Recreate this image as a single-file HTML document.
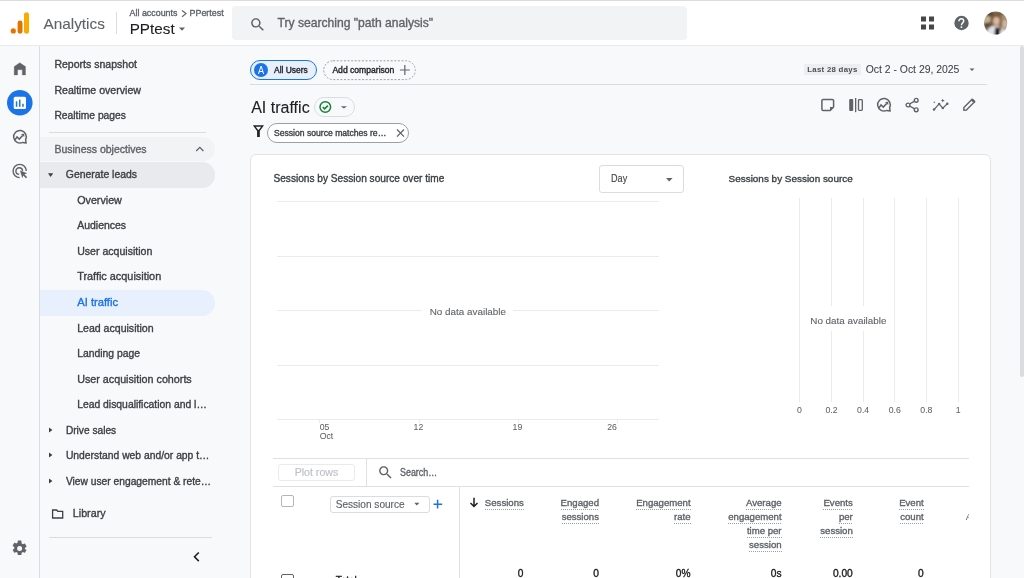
<!DOCTYPE html>
<html><head><meta charset="utf-8"><style>
html,body{margin:0;padding:0;width:1024px;height:578px;overflow:hidden;background:#f8f9fa;font-family:"Liberation Sans",sans-serif;}
.t{position:absolute;white-space:nowrap;-webkit-text-stroke:0.35px currentColor;}
#w{position:absolute;left:0;top:0;width:1024px;height:578px;overflow:hidden;will-change:transform;}
</style></head><body><div id="w">
<div style="position:absolute;left:0px;top:0px;width:1024px;height:1px;background:#dcdcdc"></div>
<div style="position:absolute;left:0px;top:1px;width:1024px;height:44px;background:#fff"></div>
<div style="position:absolute;left:0px;top:45px;width:1024px;height:1px;background:#e8eaed"></div>
<svg style="position:absolute;left:8px;top:10px;" width="24" height="26" viewBox="0 0 24 26"><circle cx="5.3" cy="20.9" r="2.6" fill="#e37400"/><rect x="9.6" y="10.5" width="4.9" height="13.3" rx="2.45" fill="#e37400"/><rect x="16" y="2.3" width="5" height="21.5" rx="2.5" fill="#f9ab00"/></svg>
<div class="t" style="left:43.40px;top:14.70px;font-size:15.39px;line-height:18.47px;color:#5f6368;-webkit-text-stroke:0.1px currentColor;">Analytics</div>
<div style="position:absolute;left:116px;top:12px;width:1px;height:22px;background:#dadce0"></div>
<div class="t" style="left:129.60px;top:7.81px;font-size:8.90px;line-height:10.68px;color:#5f6368;">All accounts</div>
<svg style="position:absolute;left:180px;top:9px;" width="8" height="9" viewBox="0 0 8 9"><path d="M2 1.5 L6 4.6 L2 7.7" fill="none" stroke="#5f6368" stroke-width="1.2"/></svg>
<div class="t" style="left:189.60px;top:7.81px;font-size:8.90px;line-height:10.68px;color:#5f6368;">PPertest</div>
<div class="t" style="left:129.70px;top:20.01px;font-size:15.28px;line-height:18.33px;color:#202124;-webkit-text-stroke:0.1px currentColor;">PPtest</div>
<svg style="position:absolute;left:178px;top:26px;" width="8" height="6" viewBox="0 0 8 6"><path d="M1 1.5 H7 L4 4.8 Z" fill="#5f6368"/></svg>
<div style="position:absolute;left:232px;top:6px;width:455px;height:34px;background:#f1f3f4;border-radius:4px"></div>
<svg style="position:absolute;left:248.5px;top:15.6px;" width="17.4" height="17.4" viewBox="0 0 24 24"><path fill="#5f6368" d="M15.5 14h-.79l-.28-.27C15.41 12.59 16 11.11 16 9.5 16 5.91 13.09 3 9.5 3S3 5.91 3 9.5 5.91 16 9.5 16c1.61 0 3.09-.59 4.23-1.57l.27.28v.79l5 4.99L20.49 19l-4.99-5zm-6 0C7.01 14 5 11.99 5 9.5S7.01 5 9.5 5 14 7.01 14 9.5 11.99 14 9.5 14z"/></svg>
<div class="t" style="left:277.50px;top:16.22px;font-size:12.11px;line-height:14.53px;color:#5f6368;">Try searching "path analysis"</div>
<svg style="position:absolute;left:920px;top:16px;" width="15" height="15" viewBox="0 0 15 15"><rect x="1" y="0.5" width="5" height="5" fill="#444746"/><rect x="9" y="0.5" width="5" height="5" fill="#444746"/><rect x="1" y="8.5" width="5" height="5" fill="#444746"/><rect x="9" y="8.5" width="5" height="5" fill="#444746"/></svg>
<svg style="position:absolute;left:953px;top:15px;" width="17" height="17" viewBox="0 0 17 17"><circle cx="8.5" cy="8" r="7.2" fill="#5f6368"/><path d="M5.9 6.3 C5.9 4.7 7 3.8 8.3 3.8 C9.7 3.8 10.7 4.8 10.7 6 C10.7 7.7 8.6 7.9 8.4 10.2" fill="none" stroke="#fff" stroke-width="1.45"/><circle cx="8.4" cy="12.1" r="0.95" fill="#fff"/></svg>
<svg style="position:absolute;left:983px;top:10px;" width="26" height="26" viewBox="0 0 26 26"><defs><clipPath id="av"><circle cx="12.6" cy="13" r="11.6"/></clipPath><filter id="bl" x="-20%" y="-20%" width="140%" height="140%"><feGaussianBlur stdDeviation="1"/></filter></defs><g clip-path="url(#av)"><g filter="url(#bl)"><rect width="26" height="26" fill="#85735f"/><ellipse cx="3.5" cy="9" rx="4" ry="5" fill="#c4b193"/><ellipse cx="5" cy="15" rx="4" ry="2.5" fill="#5a4c3e"/><ellipse cx="7" cy="4" rx="4" ry="2.5" fill="#4d4238"/><ellipse cx="21" cy="7" rx="4" ry="5" fill="#a48f74"/><ellipse cx="22" cy="14" rx="3" ry="4" fill="#c9b79e"/><ellipse cx="19" cy="3" rx="3" ry="2" fill="#6a5a48"/><path d="M8 9 C8 4 10.5 2.5 13.5 2.5 C17 2.5 18.5 5 18.5 9 L19.5 22 L16 22 L15.5 12 L11 12 L10 19 L7.5 19Z" fill="#7d5a3a"/><ellipse cx="13.4" cy="11" rx="3.3" ry="4" fill="#dbb9a0"/><path d="M3 27 C3.5 20 6.5 16 10.5 16 L16 16 C20 17 23 20 24 27Z" fill="#e2e4ea"/><path d="M11.5 27 L12 17.5 L16.5 17.5 L17 27Z" fill="#16161d"/><path d="M16 12 L18.2 12 L18.8 21 L16.6 21Z" fill="#8d6745"/></g></g></svg>
<div style="position:absolute;left:39px;top:46px;width:1px;height:532px;background:#dadce0"></div>
<svg style="position:absolute;left:12px;top:61px;" width="16" height="16" viewBox="0 0 16 16"><path d="M2.2 5.6 L7.8 1.7 L13.5 5.6 V14 H10.3 V8.7 H5.6 V14 H2.2 Z" fill="#5f6368" stroke="#5f6368" stroke-width="0.3" stroke-linejoin="round"/></svg>
<svg style="position:absolute;left:7px;top:90px;" width="26" height="26" viewBox="0 0 26 26"><circle cx="12.8" cy="12.8" r="12.8" fill="#1a73e8"/><rect x="6.7" y="6.8" width="12.3" height="12.2" rx="1.5" fill="#fff"/><rect x="8.8" y="11.3" width="1.5" height="5.5" fill="#1a73e8"/><rect x="12" y="9.6" width="1.5" height="7.2" fill="#1a73e8"/><rect x="15.2" y="13.8" width="1.5" height="3" fill="#1a73e8"/></svg>
<svg style="position:absolute;left:12px;top:129px;" width="16" height="16" viewBox="0 0 16 16"><path d="M13.6 10.6 A6.3 6.3 0 1 0 10.8 13.4 L14.1 14.1 Z" fill="none" stroke="#5f6368" stroke-width="1.5" stroke-linejoin="round"/><path d="M2.9 11.1 L5 7.9 L7.3 10.1 L10.6 6.4" fill="none" stroke="#5f6368" stroke-width="1.5"/><path d="M9 4.9 L12.3 4.8 L12.2 8.1 Z" fill="#5f6368"/></svg>
<svg style="position:absolute;left:12px;top:163px;" width="16" height="16" viewBox="0 0 16 16"><path d="M7.7 14.6 A6.6 6.6 0 1 1 14.3 8" fill="none" stroke="#5f6368" stroke-width="1.4"/><path d="M7.2 11.3 A3.3 3.3 0 1 1 10.5 8" fill="none" stroke="#5f6368" stroke-width="1.4"/><path d="M8 7.6 L15.2 10.3 L12.4 11.2 L15.2 14.2 L14 15.3 L11.2 12.4 L10.3 15.2 Z" fill="#5f6368"/></svg>
<svg style="position:absolute;left:11.4px;top:540px;" width="16" height="16" viewBox="0 0 16 16"><path fill="#5f6368" d="M13.7 8.7c.03-.23.05-.46.05-.7s-.02-.47-.05-.7l1.5-1.2c.14-.1.17-.3.09-.45l-1.43-2.5c-.09-.15-.27-.2-.43-.15l-1.78.72c-.37-.28-.77-.52-1.2-.7L10.17.1A.35.35 0 0 0 9.82 0H6.98c-.18 0-.33.13-.35.3l-.27 1.9c-.43.18-.83.42-1.2.7l-1.78-.72c-.16-.06-.34 0-.43.15L1.52 4.83c-.09.15-.05.34.09.45l1.51 1.18c-.03.23-.05.47-.05.7s.02.47.05.7L1.6 9.06c-.14.1-.17.3-.09.45l1.43 2.5c.09.15.27.2.43.15l1.78-.72c.37.28.77.52 1.2.7l.27 1.9c.02.17.17.3.35.3h2.86c.18 0 .33-.13.35-.3l.27-1.9c.43-.18.83-.42 1.2-.7l1.78.72c.16.06.34 0 .43-.15l1.43-2.5c.09-.15.05-.34-.09-.45L13.7 8.7zM8.4 10.5a2.5 2.5 0 1 1 0-5 2.5 2.5 0 0 1 0 5z" transform="translate(0.2,0.6)"/></svg>
<div class="t" style="left:54.40px;top:58.10px;font-size:10.54px;line-height:12.65px;color:#3c4043;">Reports snapshot</div>
<div class="t" style="left:54.40px;top:83.60px;font-size:10.60px;line-height:12.72px;color:#3c4043;">Realtime overview</div>
<div class="t" style="left:54.40px;top:109.91px;font-size:10.31px;line-height:12.37px;color:#3c4043;">Realtime pages</div>
<div style="position:absolute;left:49px;top:132px;width:157px;height:1px;background:#dadce0"></div>
<div style="position:absolute;left:40px;top:137px;width:175px;height:24px;background:#f1f3f4;border-radius:0 12px 12px 0"></div>
<div class="t" style="left:54.40px;top:142.61px;font-size:10.51px;line-height:12.61px;color:#5f6368;">Business objectives</div>
<svg style="position:absolute;left:195px;top:145px;" width="10" height="8" viewBox="0 0 10 8"><path d="M1.2 6 L4.8 2.4 L8.4 6" fill="none" stroke="#5f6368" stroke-width="1.3"/></svg>
<div style="position:absolute;left:40px;top:162px;width:175px;height:25.5px;background:#e8eaed;border-radius:0 12.75px 12.75px 0"></div>
<svg style="position:absolute;left:47px;top:172px;" width="8" height="7" viewBox="0 0 8 7"><path d="M1 1.3 H6.2 L3.6 4.9 Z" fill="#3c4043"/></svg>
<div class="t" style="left:65.80px;top:169.11px;font-size:10.41px;line-height:12.50px;color:#3c4043;">Generate leads</div>
<div class="t" style="left:77.20px;top:193.61px;font-size:10.73px;line-height:12.87px;color:#3c4043;">Overview</div>
<div class="t" style="left:77.20px;top:220.01px;font-size:10.47px;line-height:12.57px;color:#3c4043;">Audiences</div>
<div class="t" style="left:77.20px;top:244.72px;font-size:10.57px;line-height:12.69px;color:#3c4043;">User acquisition</div>
<div class="t" style="left:77.20px;top:270.41px;font-size:10.89px;line-height:13.06px;color:#3c4043;">Traffic acquisition</div>
<div style="position:absolute;left:40px;top:290px;width:175px;height:25.6px;background:#e8f0fe;border-radius:0 12.8px 12.8px 0"></div>
<div class="t" style="left:77.20px;top:295.71px;font-size:11.21px;line-height:13.45px;color:#1a73e8;">AI traffic</div>
<div class="t" style="left:77.20px;top:321.72px;font-size:10.57px;line-height:12.69px;color:#3c4043;">Lead acquisition</div>
<div class="t" style="left:77.20px;top:348.31px;font-size:10.36px;line-height:12.43px;color:#3c4043;">Landing page</div>
<div class="t" style="left:77.20px;top:372.70px;font-size:10.74px;line-height:12.89px;color:#3c4043;">User acquisition cohorts</div>
<div class="t" style="left:77.20px;top:399.21px;font-size:10.36px;line-height:12.43px;color:#3c4043;">Lead disqualification and l…</div>
<svg style="position:absolute;left:47px;top:426.9px;" width="7" height="7" viewBox="0 0 7 7"><path d="M2 0.6 V5.4 L5.4 3 Z" fill="#3c4043"/></svg>
<div class="t" style="left:65.90px;top:424.91px;font-size:10.17px;line-height:12.20px;color:#3c4043;">Drive sales</div>
<svg style="position:absolute;left:47px;top:452.2px;" width="7" height="7" viewBox="0 0 7 7"><path d="M2 0.6 V5.4 L5.4 3 Z" fill="#3c4043"/></svg>
<div class="t" style="left:65.90px;top:450.21px;font-size:10.33px;line-height:12.40px;color:#3c4043;">Understand web and/or app t…</div>
<svg style="position:absolute;left:47px;top:478px;" width="7" height="7" viewBox="0 0 7 7"><path d="M2 0.6 V5.4 L5.4 3 Z" fill="#3c4043"/></svg>
<div class="t" style="left:65.90px;top:476.00px;font-size:10.25px;line-height:12.30px;color:#3c4043;">View user engagement &amp; rete…</div>
<svg style="position:absolute;left:50px;top:507px;" width="15" height="13" viewBox="0 0 15 13"><path d="M2.6 3 H6.6 L7.8 4.3 H12.7 V11 H2.6 Z" fill="none" stroke="#3c4043" stroke-width="1.3"/></svg>
<div class="t" style="left:72.80px;top:507.41px;font-size:10.73px;line-height:12.88px;color:#3c4043;">Library</div>
<div style="position:absolute;left:49px;top:537px;width:163px;height:1px;background:#dadce0"></div>
<svg style="position:absolute;left:192px;top:551px;" width="9" height="12" viewBox="0 0 9 12"><path d="M6.8 1.5 L2.5 5.8 L6.8 10.1" fill="none" stroke="#202124" stroke-width="1.6"/></svg>
<div style="position:absolute;left:250.3px;top:60.3px;width:66.7px;height:19.7px;box-sizing:border-box;border:1px solid #1a73e8;background:#e8f0fe;border-radius:10px"></div>
<svg style="position:absolute;left:254px;top:63px;" width="14" height="14" viewBox="0 0 14 14"><circle cx="7" cy="7" r="7" fill="#1a73e8"/></svg>
<div class="t" style="left:258.20px;top:64.01px;font-size:10.80px;line-height:12.96px;color:#fff;-webkit-text-stroke:0px currentColor;transform:scaleX(0.8468);transform-origin:0 0;">A</div>
<div class="t" style="left:274.00px;top:65.11px;font-size:8.45px;line-height:10.14px;color:#202124;">All Users</div>
<svg style="position:absolute;left:323px;top:60px;" width="93" height="21" viewBox="0 0 93 21"><rect x="0.7" y="0.8" width="91.6" height="18.8" rx="9.4" fill="none" stroke="#9aa0a6" stroke-width="1" stroke-dasharray="2 1.6"/></svg>
<div class="t" style="left:332.40px;top:65.11px;font-size:8.58px;line-height:10.30px;color:#202124;">Add comparison</div>
<svg style="position:absolute;left:399px;top:64px;" width="12" height="12" viewBox="0 0 12 12"><path d="M5.85 1 V11 M0.9 6 H10.8" fill="none" stroke="#5f6368" stroke-width="1.2"/></svg>
<div style="position:absolute;left:250px;top:84px;width:737px;height:1px;background:#dadce0"></div>
<div style="position:absolute;left:804.4px;top:63.8px;width:56.6px;height:11.1px;background:#eceef0"></div>
<div class="t" style="left:807.20px;top:65.20px;font-size:7.80px;line-height:9.36px;color:#4a4e52;font-weight:700;letter-spacing:0.3px;-webkit-text-stroke:0px currentColor;">Last 28 days</div>
<div class="t" style="left:865.70px;top:64.21px;font-size:10.42px;line-height:12.50px;color:#3c4043;-webkit-text-stroke:0.05px currentColor;">Oct 2 - Oct 29, 2025</div>
<svg style="position:absolute;left:968px;top:67px;" width="8" height="5" viewBox="0 0 8 5"><path d="M1.5 1.5 H6.5 L4 4 Z" fill="#5f6368"/></svg>
<div class="t" style="left:251.20px;top:97.91px;font-size:16.03px;line-height:19.24px;color:#202124;-webkit-text-stroke:0.1px currentColor;">AI traffic</div>
<div style="position:absolute;left:313.6px;top:97.4px;width:41.8px;height:19.3px;box-sizing:border-box;border:1px solid #dadce0;border-radius:10px"></div>
<svg style="position:absolute;left:318px;top:100px;" width="15" height="15" viewBox="0 0 15 15"><circle cx="7.3" cy="7" r="5.3" fill="none" stroke="#188038" stroke-width="1.5"/><path d="M4.8 7.1 L6.6 8.9 L9.9 5.6" fill="none" stroke="#188038" stroke-width="1.5"/></svg>
<svg style="position:absolute;left:339px;top:104px;" width="10" height="6" viewBox="0 0 10 6"><path d="M1.8 2.2 H8 L4.9 4.6 Z" fill="#5f6368"/></svg>
<svg style="position:absolute;left:252px;top:124px;" width="13" height="14" viewBox="0 0 13 14"><path d="M0.9 1.2 H12 L7.8 6.9 V13.1 H5.1 V6.9 Z" fill="#202124"/><path d="M3.7 2.8 H9.2 L6.45 6.3 Z" fill="#f8f9fa"/></svg>
<div style="position:absolute;left:267px;top:123px;width:142.4px;height:19.7px;box-sizing:border-box;border:1px solid #9aa0a6;background:#fff;border-radius:10px"></div>
<div class="t" style="left:274.00px;top:127.71px;font-size:8.61px;line-height:10.34px;color:#3c4043;">Session source matches re…</div>
<svg style="position:absolute;left:395px;top:128px;" width="11" height="11" viewBox="0 0 11 11"><path d="M2 1.5 L9 8.6 M9 1.5 L2 8.6" fill="none" stroke="#5f6368" stroke-width="1.3"/></svg>
<svg style="position:absolute;left:819.5px;top:97px;" width="16" height="16" viewBox="0 0 16 16"><path d="M3.2 2.5 H12.3 Q13.6 2.5 13.6 3.8 V10 L10 13.6 H3.2 Q1.9 13.6 1.9 12.3 V3.8 Q1.9 2.5 3.2 2.5 Z" fill="none" stroke="#5f6368" stroke-width="1.5" stroke-linejoin="round"/><path d="M13.6 10 H10 V13.6 Z" fill="#5f6368"/></svg>
<svg style="position:absolute;left:848px;top:97px;" width="17" height="16" viewBox="0 0 17 16"><rect x="1.2" y="2" width="4" height="12" rx="1" fill="#5f6368"/><rect x="7" y="1" width="1.3" height="14.2" fill="#5f6368"/><rect x="10.5" y="2.6" width="3.8" height="10.8" rx="0.8" fill="none" stroke="#5f6368" stroke-width="1.3"/></svg>
<svg style="position:absolute;left:876px;top:97px;" width="17" height="16" viewBox="0 0 17 16"><path d="M13.6 10.6 A6.3 6.3 0 1 0 10.8 13.4 L14.1 14.1 Z" fill="none" stroke="#5f6368" stroke-width="1.5" stroke-linejoin="round"/><path d="M2.9 11.1 L5 7.9 L7.3 10.1 L10.6 6.4" fill="none" stroke="#5f6368" stroke-width="1.5"/><path d="M9 4.9 L12.3 4.8 L12.2 8.1 Z" fill="#5f6368"/></svg>
<svg style="position:absolute;left:905px;top:97px;" width="16" height="16" viewBox="0 0 16 16"><circle cx="11.2" cy="3.3" r="1.9" fill="none" stroke="#5f6368" stroke-width="1.4"/><circle cx="3" cy="8" r="1.9" fill="none" stroke="#5f6368" stroke-width="1.4"/><circle cx="11.2" cy="12.8" r="1.9" fill="none" stroke="#5f6368" stroke-width="1.4"/><path d="M4.6 7 L9.6 4.2 M4.6 9 L9.6 11.9" stroke="#5f6368" stroke-width="1.4"/></svg>
<svg style="position:absolute;left:932px;top:97px;" width="18" height="16" viewBox="0 0 18 16"><path d="M2 12.6 L7.1 6.9 L10.8 11.1 L15.3 6.8" fill="none" stroke="#5f6368" stroke-width="1.3"/><circle cx="2" cy="12.6" r="1.25" fill="#5f6368"/><circle cx="7.1" cy="6.9" r="1.25" fill="#5f6368"/><circle cx="10.8" cy="11.1" r="1.25" fill="#5f6368"/><circle cx="15.3" cy="6.8" r="1.25" fill="#5f6368"/><path d="M10.8 1.7 L11.4 3.0 L12.7 3.6 L11.4 4.2 L10.8 5.5 L10.2 4.2 L8.9 3.6 L10.2 3.0Z" fill="#5f6368"/><path d="M2.4 4.7 V6.1 M1.7 5.4 H3.1" stroke="#5f6368" stroke-width="0.7"/></svg>
<svg style="position:absolute;left:961px;top:97px;" width="16" height="16" viewBox="0 0 16 16"><path d="M2.8 13.2 L2.9 10.6 L10.9 2.6 L13.4 5.1 L5.4 13.1 Z" fill="none" stroke="#5f6368" stroke-width="1.4" stroke-linejoin="round"/><path d="M11.3 2.9 L13.1 4.7" stroke="#5f6368" stroke-width="2.6" stroke-linecap="round"/></svg>
<div style="position:absolute;left:250px;top:154px;width:740.6px;height:440px;box-sizing:border-box;border:1px solid #e3e3e3;background:#fff;border-radius:6px"></div>
<div class="t" style="left:273.50px;top:173.41px;font-size:10.12px;line-height:12.15px;color:#3c4043;">Sessions by Session source over time</div>
<div style="position:absolute;left:599.3px;top:165.3px;width:84.4px;height:27.8px;box-sizing:border-box;border:1px solid #dadce0;border-radius:3px"></div>
<div class="t" style="left:610.70px;top:172.31px;font-size:10.60px;line-height:12.72px;color:#3c4043;-webkit-text-stroke:0.1px currentColor;transform:scaleX(0.8594);transform-origin:0 0;">Day</div>
<svg style="position:absolute;left:665px;top:176px;" width="9" height="7" viewBox="0 0 9 7"><path d="M1 1.9 H7.6 L4.3 5.4 Z" fill="#5f6368"/></svg>
<div style="position:absolute;left:276.7px;top:201px;width:382.4px;height:1px;background:#ebebeb"></div>
<div style="position:absolute;left:276.7px;top:256px;width:382.4px;height:1px;background:#ebebeb"></div>
<div style="position:absolute;left:276.7px;top:310px;width:382.4px;height:1px;background:#ebebeb"></div>
<div style="position:absolute;left:276.7px;top:365px;width:382.4px;height:1px;background:#ebebeb"></div>
<div style="position:absolute;left:276.7px;top:419px;width:382.4px;height:1px;background:#ebebeb"></div>
<div style="position:absolute;left:422.3px;top:300px;width:90.8px;height:20px;background:#fff"></div>
<div class="t" style="left:429.70px;top:305.71px;font-size:9.89px;line-height:11.86px;color:#5f6368;-webkit-text-stroke:0.1px currentColor;">No data available</div>
<div style="position:absolute;left:319.3px;top:419px;width:1px;height:4px;background:#ebebeb"></div>
<div class="t" style="left:319.70px;top:422.00px;font-size:8.70px;line-height:10.44px;color:#5f6368;-webkit-text-stroke:0.05px currentColor;">05</div>
<div style="position:absolute;left:418.5px;top:419px;width:1px;height:4px;background:#ebebeb"></div>
<div class="t" style="left:413.56px;top:422.00px;font-size:8.70px;line-height:10.44px;color:#5f6368;-webkit-text-stroke:0.05px currentColor;">12</div>
<div style="position:absolute;left:517.5px;top:419px;width:1px;height:4px;background:#ebebeb"></div>
<div class="t" style="left:512.56px;top:422.00px;font-size:8.70px;line-height:10.44px;color:#5f6368;-webkit-text-stroke:0.05px currentColor;">19</div>
<div style="position:absolute;left:617px;top:419px;width:1px;height:4px;background:#ebebeb"></div>
<div class="t" style="left:607.22px;top:422.00px;font-size:8.70px;line-height:10.44px;color:#5f6368;-webkit-text-stroke:0.05px currentColor;">26</div>
<div class="t" style="left:319.70px;top:430.50px;font-size:8.70px;line-height:10.44px;color:#5f6368;-webkit-text-stroke:0.05px currentColor;">Oct</div>
<div class="t" style="left:728.60px;top:173.20px;font-size:9.93px;line-height:11.92px;color:#3c4043;">Sessions by Session source</div>
<div style="position:absolute;left:798.8px;top:197.5px;width:1px;height:204.2px;background:#ebebeb"></div>
<div class="t" style="left:796.88px;top:405.10px;font-size:8.70px;line-height:10.44px;color:#5f6368;-webkit-text-stroke:0.05px currentColor;">0</div>
<div style="position:absolute;left:831.0px;top:197.5px;width:1px;height:204.2px;background:#ebebeb"></div>
<div class="t" style="left:825.45px;top:405.10px;font-size:8.70px;line-height:10.44px;color:#5f6368;-webkit-text-stroke:0.05px currentColor;">0.2</div>
<div style="position:absolute;left:862.6px;top:197.5px;width:1px;height:204.2px;background:#ebebeb"></div>
<div class="t" style="left:857.05px;top:405.10px;font-size:8.70px;line-height:10.44px;color:#5f6368;-webkit-text-stroke:0.05px currentColor;">0.4</div>
<div style="position:absolute;left:894.3px;top:197.5px;width:1px;height:204.2px;background:#ebebeb"></div>
<div class="t" style="left:888.75px;top:405.10px;font-size:8.70px;line-height:10.44px;color:#5f6368;-webkit-text-stroke:0.05px currentColor;">0.6</div>
<div style="position:absolute;left:925.9px;top:197.5px;width:1px;height:204.2px;background:#ebebeb"></div>
<div class="t" style="left:920.35px;top:405.10px;font-size:8.70px;line-height:10.44px;color:#5f6368;-webkit-text-stroke:0.05px currentColor;">0.8</div>
<div style="position:absolute;left:957.7px;top:197.5px;width:1px;height:204.2px;background:#ebebeb"></div>
<div class="t" style="left:955.78px;top:405.10px;font-size:8.70px;line-height:10.44px;color:#5f6368;-webkit-text-stroke:0.05px currentColor;">1</div>
<div style="position:absolute;left:806px;top:306px;width:84px;height:24.5px;background:#fff"></div>
<div class="t" style="left:810.30px;top:314.91px;font-size:9.86px;line-height:11.83px;color:#5f6368;-webkit-text-stroke:0.1px currentColor;">No data available</div>
<div style="position:absolute;left:273px;top:458px;width:696px;height:1px;background:#e0e0e0"></div>
<div style="position:absolute;left:277.7px;top:464px;width:77.1px;height:16.7px;box-sizing:border-box;border:1px solid #e8eaed;border-radius:3px"></div>
<div class="t" style="left:294.70px;top:466.00px;font-size:10.58px;line-height:12.69px;color:#bdc1c6;-webkit-text-stroke:0.15px currentColor;">Plot rows</div>
<div style="position:absolute;left:366px;top:458px;width:1px;height:28px;background:#e0e0e0"></div>
<div style="position:absolute;left:273px;top:486px;width:696px;height:1px;background:#e0e0e0"></div>
<svg style="position:absolute;left:377px;top:464px;" width="17" height="17" viewBox="0 0 24 24"><path fill="#5f6368" d="M15.5 14h-.79l-.28-.27C15.41 12.59 16 11.11 16 9.5 16 5.91 13.09 3 9.5 3S3 5.91 3 9.5 5.91 16 9.5 16c1.61 0 3.09-.59 4.23-1.57l.27.28v.79l5 4.99L20.49 19l-4.99-5zm-6 0C7.01 14 5 11.99 5 9.5S7.01 5 9.5 5 14 7.01 14 9.5 11.99 14 9.5 14z"/></svg>
<div class="t" style="left:400.20px;top:467.00px;font-size:10.00px;line-height:12.00px;color:#5f6368;transform:scaleX(0.8901);transform-origin:0 0;">Search…</div>
<div style="position:absolute;left:281.2px;top:494.9px;width:12.4px;height:12.4px;box-sizing:border-box;border:1.5px solid #b5b5b5;border-radius:2px"></div>
<div style="position:absolute;left:329.5px;top:496.3px;width:100px;height:16.6px;box-sizing:border-box;border:1px solid #dadce0;border-radius:3px"></div>
<div class="t" style="left:335.70px;top:499.01px;font-size:10.08px;line-height:12.09px;color:#5f6368;-webkit-text-stroke:0.15px currentColor;">Session source</div>
<svg style="position:absolute;left:413px;top:501px;" width="8" height="6" viewBox="0 0 8 6"><path d="M1.3 1.8 H6.4 L3.85 4.6 Z" fill="#5f6368"/></svg>
<svg style="position:absolute;left:433px;top:498px;" width="11" height="12" viewBox="0 0 11 12"><path d="M4.6 1.8 V10.6 M0.5 6.2 H9.2" fill="none" stroke="#1a73e8" stroke-width="1.5"/></svg>
<div style="position:absolute;left:459px;top:486px;width:1px;height:100px;background:#e0e0e0"></div>
<svg style="position:absolute;left:469px;top:497px;" width="11" height="11" viewBox="0 0 11 11"><path d="M5 0.8 V9.5 M1.5 6 L5 9.5 L8.5 6" fill="none" stroke="#202124" stroke-width="1.5"/></svg>
<div class="t" style="left:484.85px;top:496.70px;font-size:9.60px;line-height:11.52px;color:#5f6368;">Sessions</div>
<div style="position:absolute;left:484.84799999999996px;top:508.7px;width:38.952px;height:1px;background:repeating-linear-gradient(90deg,#9aa0a6 0 1px,transparent 1px 2px)"></div>
<div class="t" style="left:560.57px;top:496.70px;font-size:9.60px;line-height:11.52px;color:#5f6368;">Engaged</div>
<div style="position:absolute;left:560.5655px;top:508.7px;width:38.4345px;height:1px;background:repeating-linear-gradient(90deg,#9aa0a6 0 1px,transparent 1px 2px)"></div>
<div class="t" style="left:561.65px;top:510.90px;font-size:9.60px;line-height:11.52px;color:#5f6368;">sessions</div>
<div style="position:absolute;left:561.6514999999999px;top:522.9px;width:37.3485px;height:1px;background:repeating-linear-gradient(90deg,#9aa0a6 0 1px,transparent 1px 2px)"></div>
<div class="t" style="left:636.16px;top:496.70px;font-size:9.60px;line-height:11.52px;color:#5f6368;">Engagement</div>
<div style="position:absolute;left:636.1635px;top:508.7px;width:54.436499999999995px;height:1px;background:repeating-linear-gradient(90deg,#9aa0a6 0 1px,transparent 1px 2px)"></div>
<div class="t" style="left:674.06px;top:510.90px;font-size:9.60px;line-height:11.52px;color:#5f6368;">rate</div>
<div style="position:absolute;left:674.0595000000001px;top:522.9px;width:16.540499999999998px;height:1px;background:repeating-linear-gradient(90deg,#9aa0a6 0 1px,transparent 1px 2px)"></div>
<div class="t" style="left:746.02px;top:496.70px;font-size:9.60px;line-height:11.52px;color:#5f6368;">Average</div>
<div style="position:absolute;left:746.02px;top:508.7px;width:35.58px;height:1px;background:repeating-linear-gradient(90deg,#9aa0a6 0 1px,transparent 1px 2px)"></div>
<div class="t" style="left:728.23px;top:510.90px;font-size:9.60px;line-height:11.52px;color:#5f6368;">engagement</div>
<div style="position:absolute;left:728.2285px;top:522.9px;width:53.3715px;height:1px;background:repeating-linear-gradient(90deg,#9aa0a6 0 1px,transparent 1px 2px)"></div>
<div class="t" style="left:746.92px;top:525.01px;font-size:9.60px;line-height:11.52px;color:#5f6368;">time per</div>
<div style="position:absolute;left:746.9245000000001px;top:537px;width:34.6755px;height:1px;background:repeating-linear-gradient(90deg,#9aa0a6 0 1px,transparent 1px 2px)"></div>
<div class="t" style="left:749.05px;top:538.82px;font-size:9.60px;line-height:11.52px;color:#5f6368;">session</div>
<div style="position:absolute;left:749.0515px;top:550.8px;width:32.5485px;height:1px;background:repeating-linear-gradient(90deg,#9aa0a6 0 1px,transparent 1px 2px)"></div>
<div class="t" style="left:823.45px;top:496.70px;font-size:9.60px;line-height:11.52px;color:#5f6368;">Events</div>
<div style="position:absolute;left:823.4525px;top:508.7px;width:29.3475px;height:1px;background:repeating-linear-gradient(90deg,#9aa0a6 0 1px,transparent 1px 2px)"></div>
<div class="t" style="left:838.93px;top:510.90px;font-size:9.60px;line-height:11.52px;color:#5f6368;">per</div>
<div style="position:absolute;left:838.9264999999999px;top:522.9px;width:13.8735px;height:1px;background:repeating-linear-gradient(90deg,#9aa0a6 0 1px,transparent 1px 2px)"></div>
<div class="t" style="left:820.25px;top:525.01px;font-size:9.60px;line-height:11.52px;color:#5f6368;">session</div>
<div style="position:absolute;left:820.2515px;top:537px;width:32.5485px;height:1px;background:repeating-linear-gradient(90deg,#9aa0a6 0 1px,transparent 1px 2px)"></div>
<div class="t" style="left:899.15px;top:496.70px;font-size:9.60px;line-height:11.52px;color:#5f6368;">Event</div>
<div style="position:absolute;left:899.1525px;top:508.7px;width:24.5475px;height:1px;background:repeating-linear-gradient(90deg,#9aa0a6 0 1px,transparent 1px 2px)"></div>
<div class="t" style="left:900.22px;top:510.90px;font-size:9.60px;line-height:11.52px;color:#5f6368;">count</div>
<div style="position:absolute;left:900.2175000000001px;top:522.9px;width:23.4825px;height:1px;background:repeating-linear-gradient(90deg,#9aa0a6 0 1px,transparent 1px 2px)"></div>
<div style="position:absolute;left:960px;top:507.5px;width:9px;height:20px;overflow:hidden"><div style="position:absolute;white-space:nowrap;left:5.8px;top:3.5px;font-size:9.6px;line-height:11.5px;color:#5f6368">A</div></div>
<div class="t" style="left:517.73px;top:567.81px;font-size:10.20px;line-height:12.24px;color:#202124;">0</div>
<div class="t" style="left:593.33px;top:567.81px;font-size:10.20px;line-height:12.24px;color:#202124;">0</div>
<div class="t" style="left:675.86px;top:567.81px;font-size:10.20px;line-height:12.24px;color:#202124;">0%</div>
<div class="t" style="left:770.83px;top:567.81px;font-size:10.20px;line-height:12.24px;color:#202124;">0s</div>
<div class="t" style="left:832.95px;top:567.81px;font-size:10.20px;line-height:12.24px;color:#202124;">0.00</div>
<div class="t" style="left:918.03px;top:567.81px;font-size:10.20px;line-height:12.24px;color:#202124;">0</div>
<div style="position:absolute;left:281px;top:574.2px;width:13px;height:12.6px;box-sizing:border-box;border:1.6px solid #5f6368;border-radius:2px"></div>
<div class="t" style="left:335.70px;top:575.00px;font-size:10.00px;line-height:12.00px;color:#202124;">Total</div>
<div style="position:absolute;left:1020px;top:46px;width:4px;height:331px;background:#dadce0;border-radius:2px"></div>
</div></body></html>
